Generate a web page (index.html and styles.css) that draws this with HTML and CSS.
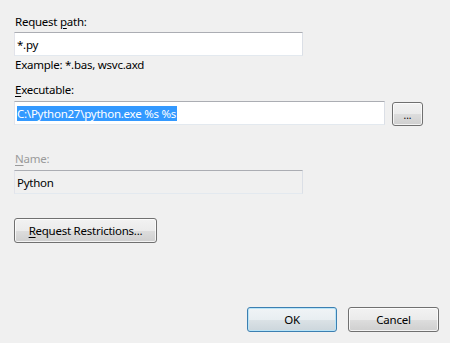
FILE: index.html
```html
<!DOCTYPE html>
<html>
<head>
<meta charset="utf-8">
<link rel="stylesheet" href="styles.css">
</head>
<body>
<div class="dialog">
  <div class="label lbl-path">Request <u>p</u>ath:</div>
  <div class="textbox tb-path"><span class="val">*.py</span></div>
  <div class="label lbl-example">Example: *.bas, wsvc.axd</div>
  <div class="label lbl-exe"><u>E</u>xecutable:</div>
  <div class="exe-row">
    <div class="textbox tb-exe"><span class="sel">C:\Python27\python.exe %s %s</span></div>
    <div class="btn btn-browse"><span class="dots">...</span></div>
  </div>
  <div class="label lbl-name disabled"><u>N</u>ame:</div>
  <div class="textbox tb-name readonly"><span class="val">Python</span></div>
  <div class="btn btn-restrict"><u>R</u>equest Restrictions...</div>
  <div class="footer">
    <div class="btn btn-ok default">OK</div>
    <div class="btn btn-cancel">Cancel</div>
  </div>
</div>
</body>
</html>
```

FILE: styles.css
```css
html, body {
  margin: 0;
  padding: 0;
  background: #f0f0f0;
}
body {
  width: 450px;
  height: 343px;
  overflow: hidden;
  font-family: "Noto Sans", "Liberation Sans", sans-serif;
  font-size: 11.5px;
  letter-spacing: -0.25px;
  color: #000;
}
.dialog {
  padding-left: 14px;
  padding-top: 14px;
}
.label {
  line-height: 16px;
  height: 16px;
  white-space: nowrap;
  padding-left: 1px;
}
.label u { text-decoration: underline; text-underline-offset: 2px; }
.disabled { color: #9a9a9a; }
.lbl-path { margin-bottom: 2px; }
.textbox {
  box-sizing: border-box;
  height: 24px;
  background: #fff;
  border: 1px solid #e2e3ea;
  border-top-color: #abadb3;
  border-right-color: #dbdfe6;
  border-bottom-color: #e3e9ef;
  display: flex;
  align-items: center;
  padding-left: 2px;
  white-space: nowrap;
}
.tb-path { width: 289px; }
.lbl-example { margin-top: 1px; }
.lbl-exe { margin-top: 9px; margin-bottom: 3px; }
.exe-row {
  display: flex;
  align-items: flex-start;
  gap: 7px;
}
.tb-exe { width: 371px; }
.sel {
  background: #3399ff;
  color: #fff;
  line-height: 15px;
  padding-right: 1px;
}
.btn {
  box-sizing: border-box;
  border: 1px solid #707070;
  border-radius: 3px;
  background: linear-gradient(to bottom, #f2f2f2 0%, #ebebeb 50%, #dddddd 51%, #cfcfcf 100%);
  box-shadow: inset 0 0 0 1px rgba(255,255,255,0.75);
  display: flex;
  align-items: center;
  justify-content: center;
  white-space: nowrap;
  height: 25px;
}
.btn-browse {
  width: 31px;
  height: 24px;
  margin-top: 1px;
}
.dots {
  font-size: 10px;
  letter-spacing: 0px;
  line-height: 10px;
  margin-top: 2px;
}
.lbl-name { margin-top: 25px; margin-bottom: 3px; }
.tb-name {
  width: 289px;
  background: #f0f0f0;
}
.btn-restrict {
  width: 143px;
  margin-top: 24px;
}
.btn-restrict u { text-decoration: underline; text-underline-offset: 2px; }
.footer {
  display: flex;
  justify-content: flex-end;
  gap: 11px;
  margin-top: 64px;
  padding-right: 11px;
}
.btn-ok { width: 90px; }
.btn-cancel { width: 91px; }
.default {
  border-color: #3c7fb1;
  box-shadow: inset 0 0 0 1px #b9e4f7;
  background: linear-gradient(to bottom, #f0f4f6 0%, #e8eef1 50%, #dbe2e6 51%, #ccd6dc 100%);
}
```
